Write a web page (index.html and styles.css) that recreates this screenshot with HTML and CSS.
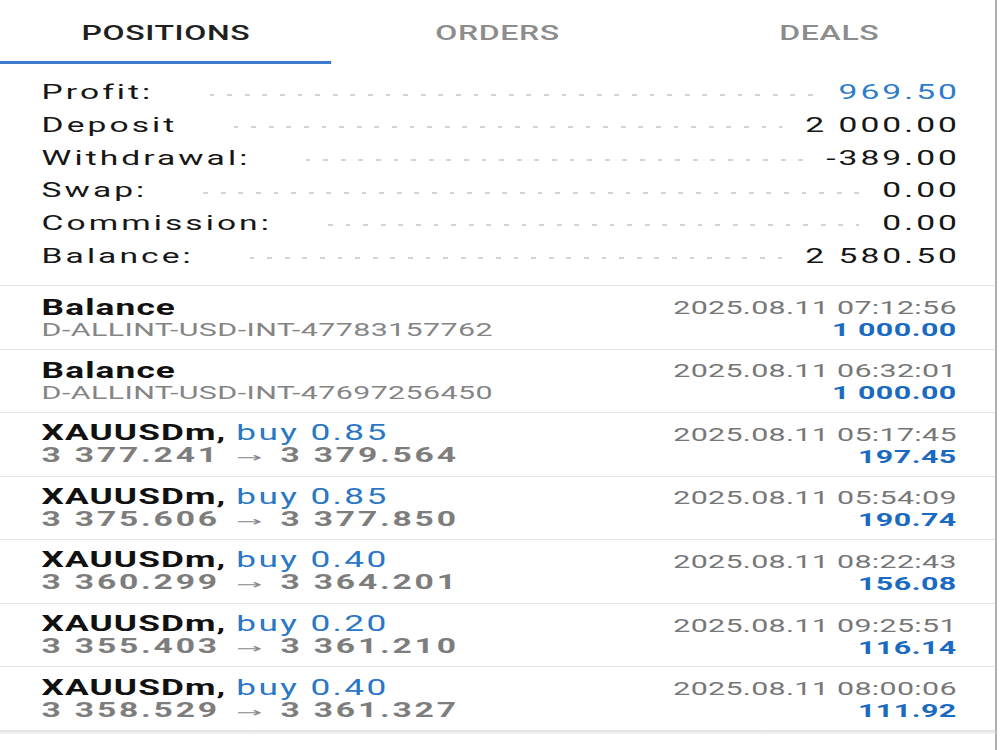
FILE: index.html
```html
<!DOCTYPE html>
<html lang="en">
<head>
    <meta charset="UTF-8">
    <meta name="viewport" content="width=device-width, initial-scale=1.0">
    <title>History</title>
    <link rel="stylesheet" href="styles.css">
</head>
<body>
    <div class="screen">
        <nav class="tabs">
            <div class="tab active">POSITIONS</div>
            <div class="tab">ORDERS</div>
            <div class="tab">DEALS</div>
        </nav>

        <section class="summary">
            <div class="sum-row"><span class="sum-label">Profit:</span><span class="leader"></span><span class="sum-value profit">969.50</span></div>
            <div class="sum-row"><span class="sum-label">Deposit</span><span class="leader"></span><span class="sum-value">2 000.00</span></div>
            <div class="sum-row"><span class="sum-label">Withdrawal:</span><span class="leader"></span><span class="sum-value">-389.00</span></div>
            <div class="sum-row"><span class="sum-label">Swap:</span><span class="leader"></span><span class="sum-value">0.00</span></div>
            <div class="sum-row"><span class="sum-label">Commission:</span><span class="leader"></span><span class="sum-value">0.00</span></div>
            <div class="sum-row"><span class="sum-label">Balance:</span><span class="leader"></span><span class="sum-value">2 580.50</span></div>
        </section>

        <ul class="deals">
            <li class="deal">
                <div class="deal-main">
                    <div class="deal-title">Balance</div>
                    <div class="deal-sub">D-ALLINT-USD-INT-47783157762</div>
                </div>
                <div class="deal-side">
                    <div class="deal-time">2025.08.11 07:12:56</div>
                    <div class="deal-amount">1 000.00</div>
                </div>
            </li>
            <li class="deal">
                <div class="deal-main">
                    <div class="deal-title">Balance</div>
                    <div class="deal-sub">D-ALLINT-USD-INT-47697256450</div>
                </div>
                <div class="deal-side">
                    <div class="deal-time">2025.08.11 06:32:01</div>
                    <div class="deal-amount">1 000.00</div>
                </div>
            </li>
            <li class="deal">
                <div class="deal-main">
                    <div class="deal-title">XAUUSDm, <span class="buy">buy 0.85</span></div>
                    <div class="deal-price">3 377.241<span class="arrow">→</span>3 379.564</div>
                </div>
                <div class="deal-side">
                    <div class="deal-time">2025.08.11 05:17:45</div>
                    <div class="deal-amount">197.45</div>
                </div>
            </li>
            <li class="deal">
                <div class="deal-main">
                    <div class="deal-title">XAUUSDm, <span class="buy">buy 0.85</span></div>
                    <div class="deal-price">3 375.606<span class="arrow">→</span>3 377.850</div>
                </div>
                <div class="deal-side">
                    <div class="deal-time">2025.08.11 05:54:09</div>
                    <div class="deal-amount">190.74</div>
                </div>
            </li>
            <li class="deal">
                <div class="deal-main">
                    <div class="deal-title">XAUUSDm, <span class="buy">buy 0.40</span></div>
                    <div class="deal-price">3 360.299<span class="arrow">→</span>3 364.201</div>
                </div>
                <div class="deal-side">
                    <div class="deal-time">2025.08.11 08:22:43</div>
                    <div class="deal-amount">156.08</div>
                </div>
            </li>
            <li class="deal">
                <div class="deal-main">
                    <div class="deal-title">XAUUSDm, <span class="buy">buy 0.20</span></div>
                    <div class="deal-price">3 355.403<span class="arrow">→</span>3 361.210</div>
                </div>
                <div class="deal-side">
                    <div class="deal-time">2025.08.11 09:25:51</div>
                    <div class="deal-amount">116.14</div>
                </div>
            </li>
            <li class="deal">
                <div class="deal-main">
                    <div class="deal-title">XAUUSDm, <span class="buy">buy 0.40</span></div>
                    <div class="deal-price">3 358.529<span class="arrow">→</span>3 361.327</div>
                </div>
                <div class="deal-side">
                    <div class="deal-time">2025.08.11 08:00:06</div>
                    <div class="deal-amount">111.92</div>
                </div>
            </li>
        </ul>
        <div class="list-end"></div>
    </div>
</body>
</html>
```

FILE: styles.css
```css
body {
    margin: 0;
    background-color: #ffffff;
    font-family: Roboto, "Noto Sans", sans-serif;
    overflow: hidden;
}

/* phone screenshot is stretched wide, so the whole screen is scaled on x */
.screen {
    width: 623px;
    height: 750px;
    box-sizing: border-box;
    border-right: 1px solid #9c9c9c;
    background-color: #ffffff;
    transform: scaleX(1.6);
    transform-origin: 0 0;
}

.tabs {
    display: flex;
    height: 64px;
}

.tab {
    flex: 1;
    display: flex;
    align-items: center;
    justify-content: center;
    box-sizing: border-box;
    padding-top: 4px;
    border-bottom: 3px solid transparent;
    font-size: 20px;
    font-weight: 500;
    letter-spacing: 0.4px;
    color: #8c8c8c;
}

.tab.active {
    color: #202020;
    border-bottom-color: #3d7ccc;
}

.summary {
    padding: 12px 22px 13px 26px;
    border-bottom: 1px solid #e3e3e3;
}

.sum-row {
    display: flex;
    align-items: center;
    height: 32.66px;
    font-size: 21px;
    letter-spacing: 1.9px;
    color: #161616;
    white-space: nowrap;
}

.leader {
    flex: 1;
    height: 2px;
    margin: 5px 14px 0 35px;
    background: repeating-linear-gradient(90deg, #d4d4d4 0 3px, transparent 3px 11px);
}

.sum-value.profit {
    color: #2c7cc9;
}

.deals {
    list-style: none;
    margin: 0;
    padding: 0;
}

.deal {
    display: flex;
    justify-content: space-between;
    align-items: center;
    height: 63.57px;
    box-sizing: border-box;
    padding: 3px 24px 0 26px;
    border-bottom: 1px solid #e3e3e3;
    line-height: 22px;
    white-space: nowrap;
}

.deal-title {
    font-size: 22px;
    font-weight: 700;
    letter-spacing: 0.7px;
    color: #111111;
}

.buy {
    font-weight: 400;
    letter-spacing: 1.5px;
    color: #2a77c6;
}

.deal-sub {
    font-size: 19px;
    letter-spacing: 0.25px;
    color: #858585;
}

.deal-price {
    font-size: 21px;
    font-weight: 700;
    letter-spacing: 1.75px;
    color: #7d7d7d;
}

.arrow {
    display: inline-block;
    font-family: "DejaVu Sans", sans-serif;
    font-size: 13px;
    font-weight: 400;
    letter-spacing: 0;
    color: #8a8a8a;
    margin: 0 14px 0 13px;
    transform: scaleX(1.5);
}

.deal-side {
    text-align: right;
}

.deal-time {
    font-size: 19px;
    letter-spacing: 0.2px;
    color: #777777;
}

.deal-amount {
    font-size: 19px;
    font-weight: 700;
    letter-spacing: 0.3px;
    color: #1a6ac2;
}

.list-end {
    height: 4px;
    background: linear-gradient(#e4e4e4, #ffffff);
}
```
